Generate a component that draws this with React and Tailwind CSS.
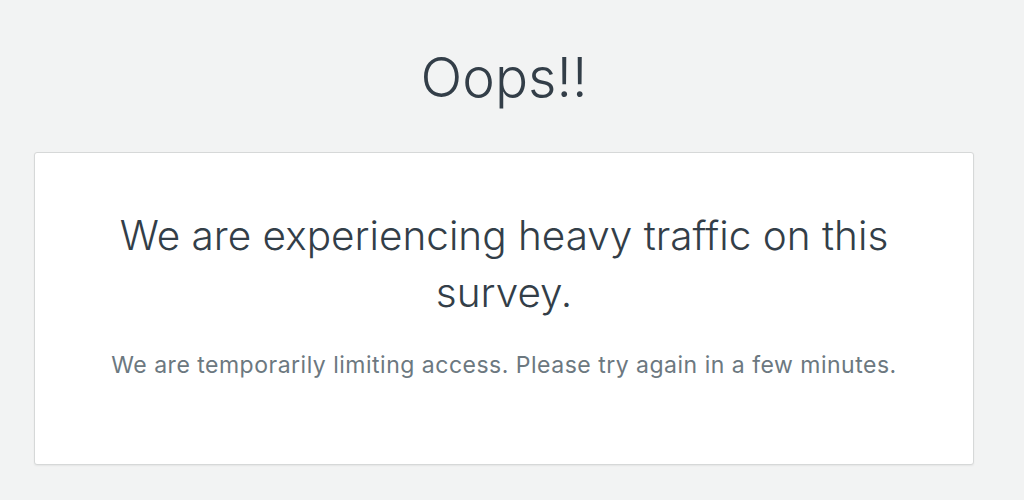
export default function App() {
  return (
    <div className="min-h-[500px] bg-[#f2f3f3] font-['Inter',sans-serif] text-[#333e48]">
      <div className="w-[940px] ml-[34px] pt-[42px]">
        <h1 className="text-center text-[55px] leading-[70px] font-light">Oops!!</h1>
        <div className="mt-[40px] h-[313px] bg-white border border-[#d6d8d8] rounded-[3px] shadow-[0_1px_2px_rgba(0,0,0,0.06)] pt-[54px] text-center">
          <h2 className="text-[40.5px] leading-[57px] font-light px-[40px]">We are experiencing heavy traffic on this survey.</h2>
          <p className="mt-[29px] text-[23px] leading-[30px] tracking-[0.5px] text-[#6c7880] font-normal">We are temporarily limiting access. Please try again in a few minutes.</p>
        </div>
      </div>
    </div>
  );
}
